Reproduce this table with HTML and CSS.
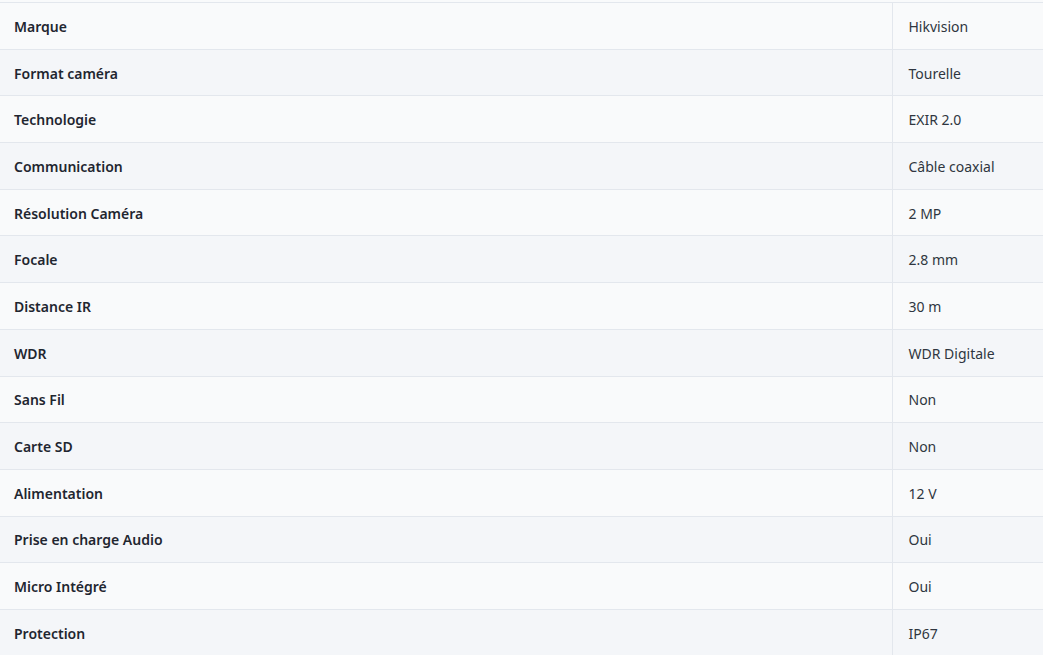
FILE: index.html
```html
<!DOCTYPE html>
<html lang="fr">
<head>
    <meta charset="UTF-8">
    <meta name="viewport" content="width=device-width, initial-scale=1.0">
    <title>Caractéristiques</title>
    <link rel="stylesheet" href="styles.css">
</head>
<body>

<table class="specs-table">
    <tbody>
        <tr><td class="spec-label">Marque</td><td class="spec-value">Hikvision</td></tr>
        <tr><td class="spec-label">Format caméra</td><td class="spec-value">Tourelle</td></tr>
        <tr><td class="spec-label">Technologie</td><td class="spec-value">EXIR 2.0</td></tr>
        <tr><td class="spec-label">Communication</td><td class="spec-value">Câble coaxial</td></tr>
        <tr><td class="spec-label">Résolution Caméra</td><td class="spec-value">2 MP</td></tr>
        <tr><td class="spec-label">Focale</td><td class="spec-value">2.8 mm</td></tr>
        <tr><td class="spec-label">Distance IR</td><td class="spec-value">30 m</td></tr>
        <tr><td class="spec-label">WDR</td><td class="spec-value">WDR Digitale</td></tr>
        <tr><td class="spec-label">Sans Fil</td><td class="spec-value">Non</td></tr>
        <tr><td class="spec-label">Carte SD</td><td class="spec-value">Non</td></tr>
        <tr><td class="spec-label">Alimentation</td><td class="spec-value">12 V</td></tr>
        <tr><td class="spec-label">Prise en charge Audio</td><td class="spec-value">Oui</td></tr>
        <tr><td class="spec-label">Micro Intégré</td><td class="spec-value">Oui</td></tr>
        <tr><td class="spec-label">Protection</td><td class="spec-value">IP67</td></tr>
    </tbody>
</table>

</body>
</html>
```

FILE: styles.css
```css
body {
    margin: 0;
    padding-top: 2px;
    background: #f9fafb;
    font-family: "Noto Sans", "Open Sans", sans-serif;
    font-size: 14px;
}
.specs-table {
    width: 100%;
    border-collapse: collapse;
}
.specs-table tr {
    background: #f9fafb;
}
.specs-table tr:nth-child(even) {
    background: #f4f6f9;
}
.specs-table td {
    height: 46.7px;
    padding: 1px 0 0 0;
    border-top: 1px solid #e3e7ed;
    box-sizing: border-box;
}
.spec-label {
    padding-left: 14px !important;
    font-weight: 600;
    color: #1f2630;
}
.spec-value {
    width: 151px;
    padding-left: 16px !important;
    border-left: 1px solid #e3e7ed;
    color: #2f3640;
}
```
